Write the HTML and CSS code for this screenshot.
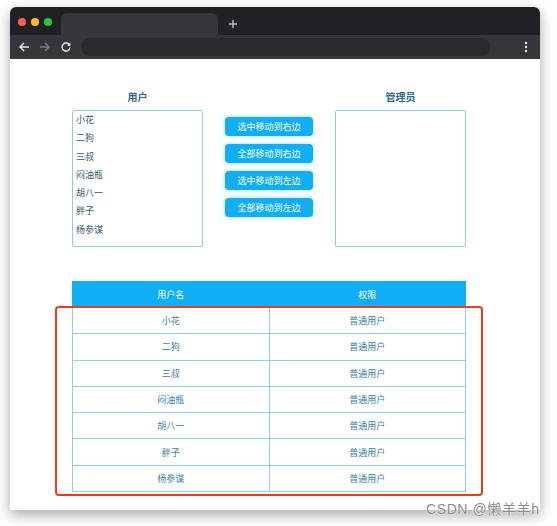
FILE: index.html
```html
<!DOCTYPE html>
<html lang="zh-CN">
<head>
    <meta charset="UTF-8">
    <title>用户权限</title>
    <link rel="stylesheet" href="styles.css">
</head>
<body>
    <div class="window">
        <div class="titlebar">
            <div class="lights">
                <span class="light red"></span>
                <span class="light yellow"></span>
                <span class="light green"></span>
            </div>
            <div class="tab"></div>
            <svg class="newtab" width="10" height="10" viewBox="0 0 10 10">
                <path d="M5 1v8M1 5h8" stroke="#bdc1c6" stroke-width="1.4"/>
            </svg>
        </div>
        <div class="toolbar">
            <svg class="nav" width="12" height="12" viewBox="0 0 12 12">
                <path d="M11 6H2M6 2L2 6l4 4" stroke="#e8eaed" stroke-width="1.4" fill="none"/>
            </svg>
            <svg class="nav" width="12" height="12" viewBox="0 0 12 12">
                <path d="M1 6h9M6 2l4 4-4 4" stroke="#7c7f83" stroke-width="1.4" fill="none"/>
            </svg>
            <svg class="nav" width="12" height="12" viewBox="0 0 12 12">
                <path d="M9.6 4.2A4 4 0 1 0 10 6.5" stroke="#e8eaed" stroke-width="1.4" fill="none"/>
                <path d="M10.4 1.6v3.4H7z" fill="#e8eaed"/>
            </svg>
            <div class="address"></div>
            <svg class="menu" width="4" height="12" viewBox="0 0 4 12">
                <circle cx="2" cy="2" r="1.2" fill="#e8eaed"/>
                <circle cx="2" cy="6" r="1.2" fill="#e8eaed"/>
                <circle cx="2" cy="10" r="1.2" fill="#e8eaed"/>
            </svg>
        </div>

        <div class="content">
            <div class="transfer">
                <div class="column">
                    <h3>用户</h3>
                    <ul class="listbox">
                        <li>小花</li>
                        <li>二狗</li>
                        <li>三叔</li>
                        <li>闷油瓶</li>
                        <li>胡八一</li>
                        <li>胖子</li>
                        <li>杨参谋</li>
                    </ul>
                </div>
                <div class="buttons">
                    <button>选中移动到右边</button>
                    <button>全部移动到右边</button>
                    <button>选中移动到左边</button>
                    <button>全部移动到左边</button>
                </div>
                <div class="column">
                    <h3>管理员</h3>
                    <ul class="listbox"></ul>
                </div>
            </div>

            <table class="users">
                <thead>
                    <tr><th>用户名</th><th>权限</th></tr>
                </thead>
                <tbody>
                    <tr><td>小花</td><td>普通用户</td></tr>
                    <tr><td>二狗</td><td>普通用户</td></tr>
                    <tr><td>三叔</td><td>普通用户</td></tr>
                    <tr><td>闷油瓶</td><td>普通用户</td></tr>
                    <tr><td>胡八一</td><td>普通用户</td></tr>
                    <tr><td>胖子</td><td>普通用户</td></tr>
                    <tr><td>杨参谋</td><td>普通用户</td></tr>
                </tbody>
            </table>

            <div class="highlight"></div>
        </div>
    </div>
    <div class="watermark">CSDN @懒羊羊h</div>
</body>
</html>
```

FILE: styles.css
```css
body {
    margin: 0;
    width: 557px;
    height: 526px;
    overflow: hidden;
    position: relative;
    background: #ffffff;
    font-family: "Noto Sans CJK SC", "Noto Sans", sans-serif;
}
.window {
    margin: 7px 0 0 10px;
    width: 530px;
    height: 503px;
    border-radius: 6px 6px 0 0;
    overflow: hidden;
    background: #ffffff;
    box-shadow: 0 5px 14px rgba(0, 0, 0, 0.35);
    display: flex;
    flex-direction: column;
}

/* Browser chrome */
.titlebar {
    height: 28px;
    background: #202124;
    display: flex;
    align-items: flex-end;
    flex-shrink: 0;
}
.lights {
    display: flex;
    gap: 5px;
    padding: 0 0 9px 8px;
    width: 43px;
}
.light {
    width: 8px;
    height: 8px;
    border-radius: 50%;
}
.red { background: #ff5f57; }
.yellow { background: #febc2e; }
.green { background: #28c840; }
.tab {
    width: 157px;
    height: 22px;
    background: #35363a;
    border-radius: 6px 6px 0 0;
}
.newtab {
    margin: 0 0 6px 10px;
}
.toolbar {
    height: 24px;
    background: #35363a;
    display: flex;
    align-items: center;
    padding-left: 8px;
    flex-shrink: 0;
}
.nav {
    margin-right: 9px;
}
.address {
    width: 409px;
    height: 18px;
    margin-left: 0;
    border-radius: 9px;
    background: #292a2d;
}
.menu {
    margin-left: 34px;
}

/* Page */
.content {
    position: relative;
    flex: 1;
    padding: 31px 0 0 62px;
    color: #2f6c8c;
}
.transfer {
    display: flex;
    gap: 22px;
}
.column {
    width: 131px;
}
.column h3 {
    margin: 0 0 6px;
    font-size: 10px;
    line-height: 14px;
    text-align: center;
    font-weight: bold;
    color: #2b6a8b;
}
.listbox {
    list-style: none;
    margin: 0;
    padding: 0 3px;
    height: 135px;
    border: 1px solid #86d0ee;
    border-radius: 2px;
}
.listbox li {
    font-size: 9px;
    line-height: 18.3px;
    color: #33566d;
}
.buttons {
    width: 88px;
    padding-top: 27px;
    display: flex;
    flex-direction: column;
    gap: 8px;
}
.buttons button {
    height: 19px;
    border: none;
    border-radius: 4px;
    background: #10aef4;
    color: #ffffff;
    font-family: inherit;
    font-size: 9px;
    padding: 0;
    box-shadow: 0 0 4px rgba(16, 174, 244, 0.45);
}

.users {
    margin-top: 34px;
    width: 394px;
    table-layout: fixed;
    border-collapse: collapse;
    font-size: 9px;
    text-align: center;
}
.users th {
    width: 50%;
    height: 25px;
    padding: 0;
    background: #10aef4;
    color: #ffffff;
    font-weight: normal;
    border: 1px solid #10aef4;
}
.users td {
    height: 25.3px;
    padding: 0;
    border: 1px solid #86d0ee;
    color: #3580a7;
}

/* Annotation overlay */
.highlight {
    position: absolute;
    left: 45px;
    top: 247px;
    width: 424px;
    height: 186px;
    border: 2px solid #f13a19;
    border-radius: 4px;
}
.watermark {
    position: absolute;
    left: 426px;
    top: 498px;
    font-family: "Liberation Sans", "Noto Sans CJK SC", sans-serif;
    font-size: 14px;
    letter-spacing: 0.6px;
    color: #8c8c8c;
    text-shadow: 0 0 2px #ffffff, 0 0 1px #ffffff;
}
```
